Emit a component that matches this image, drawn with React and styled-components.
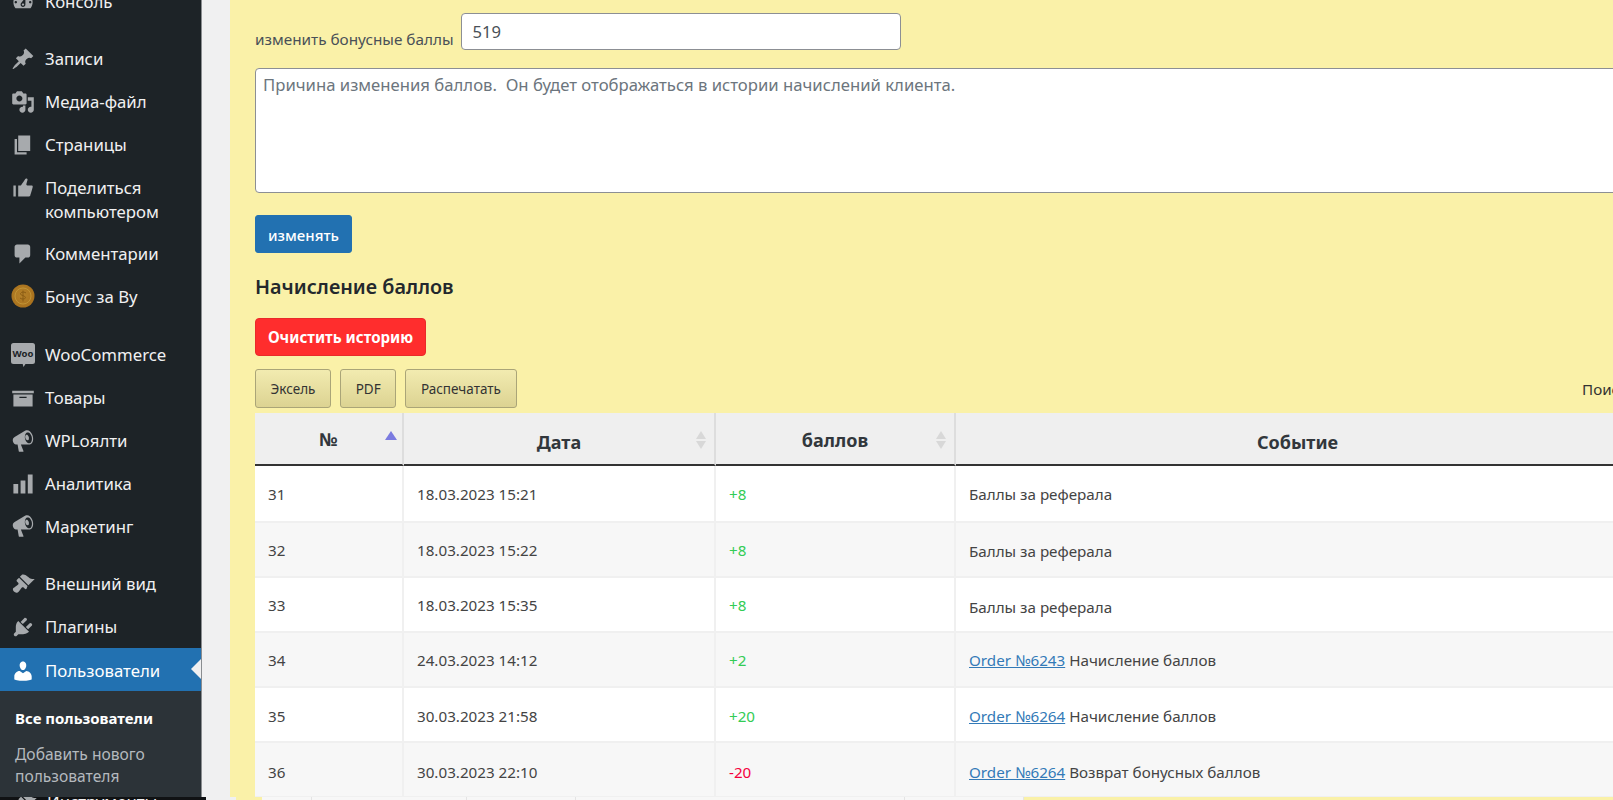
import React from "react";
import styled, { createGlobalStyle } from "styled-components";

const Global = createGlobalStyle`
  html, body { margin: 0; padding: 0; height: 800px; overflow: hidden; background: #f0f0f1; }
  body { font-family: "Noto Sans", "Open Sans", sans-serif; }
  * { box-sizing: border-box; }
`;

const Page = styled.div`display:flex;flex-direction:column;width:1613px;height:800px;overflow:hidden;`;
const Top = styled.div`display:flex;height:797px;flex:none;`;
const Sidebar = styled.nav`width:202px;flex:none;background:#1d2327;border-right:1px solid #8a8d90;overflow:hidden;`;
const Menu = styled.ul`list-style:none;margin:-20px 0 0;padding:0;color:#f0f0f1;`;
const Item = styled.li`
  position:relative;display:flex;align-items:${p=>p.$tall?"flex-start":"center"};gap:10px;padding:${p=>p.$active?"2px":p.$tall?"10px":"0"} 0 0 11px;min-height:${p=>p.$tall?"66px":"42.8px"};
  margin-top:${p=>p.$sep||0}px;font-size:16.8px;line-height:23.5px;
  background:${p=>p.$active?"#2271b1":"transparent"};color:${p=>p.$active?"#fff":"#f0f0f1"};
  ${p=>p.$active?`&::after{content:"";position:absolute;right:0;top:11px;border:10px solid transparent;border-right-color:#f0f0f1;border-left-width:0;}`:""}
`;
const ItemLabel = styled.span`display:block;width:${p=>p.$wrap?"130px":"auto"};white-space:${p=>p.$wrap?"normal":"nowrap"};`;
const Glyph = styled.svg`width:24px;height:24px;flex:none;fill:${p=>p.$active?"#fff":"#a7aaad"};`;
const StripGlyph = styled(Glyph)`margin-top:-6px;`;
const Sub = styled.ul`list-style:none;margin:0;padding:16px 0 0 15px;background:#2c3338;height:107px;`;
const SubItem = styled.li`font-size:${p=>p.$current?15:15.6}px;line-height:22px;font-weight:${p=>p.$current?700:400};color:${p=>p.$current?"#fff":"#b4b9be"};margin-bottom:14px;`;
const Gutter = styled.div`width:28px;flex:none;background:#f0f0f1;`;
const Main = styled.main`flex:1;min-width:0;background:#faf1a8;padding:13px 0 0 25px;overflow:hidden;`;

const InputRow = styled.div`display:flex;align-items:flex-end;gap:7px;height:37px;`;
const Label = styled.label`font-size:15.3px;line-height:20px;color:#495057;padding-bottom:1px;`;
const Field = styled.input`width:440px;height:37px;border:1px solid #8c8f94;border-radius:4px;padding:0 11px;font:16.6px "Noto Sans",sans-serif;color:#495057;background:#fff;`;
const Reason = styled.textarea`display:block;width:1400px;height:125px;margin:18px 0 0;border:1px solid #8c8f94;border-radius:4px;padding:4px 7px;font:16.7px/24px "Noto Sans",sans-serif;color:#6c757d;background:#fff;resize:none;`;
const Submit = styled.button`display:block;margin-top:22px;width:97px;height:38px;border:1px solid #2271b1;border-radius:3px;background:#2271b1;color:#fff;font:500 15px "Noto Sans",sans-serif;padding:1px 0 0;`;
const Heading = styled.h3`margin:20px 0 0;font-size:19.8px;line-height:28px;font-weight:600;color:#23282d;`;
const Danger = styled.button`display:block;margin-top:17px;width:171px;height:38px;border:1px solid #e92a2a;border-radius:4px;background:#ff2d2d;color:#fff;font:700 15.1px "Noto Sans",sans-serif;padding:0;`;
const Tools = styled.div`display:flex;align-items:center;gap:9px;width:1386px;height:39px;margin-top:13px;`;
const ToolButton = styled.button`height:39px;padding:0 14.6px;border:1px solid #aaa578;border-radius:3px;background:linear-gradient(#f2ebb0,#dcd392);color:#333;font:13.5px "Noto Sans",sans-serif;`;
const Search = styled.span`margin-left:auto;width:59px;font-size:15.2px;color:#333;white-space:nowrap;`;

const Table = styled.table`width:1386px;margin-top:5px;border-collapse:separate;border-spacing:0;table-layout:fixed;`;
const Head = styled.th`
  position:relative;height:53px;background:#efefef;border-right:2px solid #ddd;border-bottom:2px solid #333;
  font-size:18px;font-weight:700;color:#32373c;text-align:center;padding:${p=>p.$drop}px 0 0;
`;
const Up = styled.i`position:absolute;right:${p=>p.$right}px;top:${p=>p.$top}px;border:${p=>p.$half}px solid transparent;border-top:0;border-bottom:${p=>p.$h}px solid ${p=>p.$c};`;
const Down = styled.i`position:absolute;right:${p=>p.$right}px;top:${p=>p.$top}px;border:${p=>p.$half}px solid transparent;border-bottom:0;border-top:${p=>p.$h}px solid ${p=>p.$c};`;
const Row = styled.tr`background:${p=>p.$odd?"#fff":"#f7f7f7"};`;
const Cell = styled.td`
  height:${p=>p.$h}px;padding:${p=>p.$shift||0}px 13px 0;border-right:2px solid #f0f0f0;border-bottom:${p=>p.$last?1:2}px solid #f0f0f0;
  font-size:15.2px;line-height:20px;color:${p=>p.$c||"#444"};
`;
const Link = styled.a`color:#337ab7;text-decoration:underline;`;

const Strip = styled.div`display:flex;height:3px;flex:none;overflow:hidden;`;
const StripSide = styled.div`width:206px;flex:none;background:#101214;display:flex;gap:10px;padding-left:13px;color:#f0f0f1;font-size:16.8px;line-height:16px;`;
const StripText = styled.span`display:block;margin-top:-3px;`;
const StripGap = styled.div`width:${p=>p.$w}px;flex:${p=>p.$grow?1:"none"};background:${p=>p.$bg};`;
const StripCell = styled.div`width:${p=>p.$w}px;flex:none;background:#f7f7f7;border-right:1px solid #e4e4e4;`;

const P = {
  dash:"M3.76 16h12.48c1.1-1.37 1.76-3.11 1.76-5 0-4.42-3.58-8-8-8s-8 3.58-8 8c0 1.89.66 3.63 1.76 5zM10 4c.55 0 1 .45 1 1s-.45 1-1 1-1-.45-1-1 .45-1 1-1zM6 6c.55 0 1 .45 1 1s-.45 1-1 1-1-.45-1-1 .45-1 1-1zm8 0c.55 0 1 .45 1 1s-.45 1-1 1-1-.45-1-1 .45-1 1-1zm-5.37 5.55L12 7v6c0 1.1-.9 2-2 2s-2-.9-2-2c0-.57.24-1.08.63-1.45zM4 10c.55 0 1 .45 1 1s-.45 1-1 1-1-.45-1-1 .45-1 1-1zm12 0c.55 0 1 .45 1 1s-.45 1-1 1-1-.45-1-1 .45-1 1-1zm-5 3c0-.55-.45-1-1-1s-1 .45-1 1 .45 1 1 1 1-.45 1-1z",
  pin:"M10.44 3.02l1.82-1.82 6.36 6.35-1.83 1.82c-1.05-.68-2.48-.57-3.41.36l-.75.75c-.92.93-1.04 2.35-.35 3.41l-1.83 1.82-2.41-2.41-2.8 2.79c-.42.42-3.38 2.71-3.8 2.29s1.86-3.39 2.28-3.81l2.79-2.79L4.1 9.36l1.83-1.82c1.05.69 2.48.57 3.4-.36l.75-.75c.93-.92 1.05-2.35.36-3.41z",
  media:"M13 11V4c0-.55-.45-1-1-1h-1.67L9 1H5L3.67 3H2c-.55 0-1 .45-1 1v7c0 .55.45 1 1 1h10c.55 0 1-.45 1-1zM7 4.5c1.38 0 2.5 1.12 2.5 2.5S8.38 9.5 7 9.5 4.5 8.38 4.5 7 5.62 4.5 7 4.5zM14 6h5v10.5c0 1.38-1.12 2.5-2.5 2.5S14 17.88 14 16.5s1.12-2.5 2.5-2.5c.17 0 .34.02.5.05V9h-3V6zm-4 8.05V13h2v3.5c0 1.38-1.12 2.5-2.5 2.5S7 17.88 7 16.5 8.12 14 9.5 14c.17 0 .34.02.5.05z",
  page:"M6 15V2h10v13H6zm-1 1h8v2H3V5h2v11z",
  thumb:"M12.72 2c.15-.02.26.02.41.07.56.19.83.79.66 1.35-.17.55-1 3.04-1 3.58 0 .53.75 1 1.35 1h3c.6 0 1 .4 1 1s-2 7-2 7c-.17.39-.55 1-1 1H6V8h2.14c.41-.41 3.3-4.71 3.58-5.27.21-.41.6-.68 1-.73zM2 8h2v9H2V8z",
  comment:"M5 2h9c1.1 0 2 .9 2 2v7c0 1.1-.9 2-2 2h-2l-5 5v-5H5c-1.1 0-2-.9-2-2V4c0-1.1.9-2 2-2z",
  box:"M19 4v2H1V4h18zM2 7h16v10H2V7zm11 3V9H7v1h6z",
  mega:"M18.15 5.94c.46 1.62.38 3.22-.02 4.48-.42 1.28-1.26 2.18-2.3 2.48-.16.06-.26.06-.4.06-.06.02-.12.02-.18.02-.06.02-.14.02-.22.02h-6.8l2.22 5.5c.02.14-.06.26-.14.34-.08.1-.24.16-.34.16H6.95c-.1 0-.26-.06-.34-.16-.08-.08-.16-.2-.14-.34l-1-5.5H4.25l-.02-.02c-.5.06-1.08-.18-1.54-.62s-.88-1.08-1.06-1.88c-.24-.8-.2-1.56-.02-2.2.18-.62.58-1.08 1.06-1.3l.02-.02 9-5.4c.1-.06.18-.1.24-.16.06-.04.14-.08.24-.12.16-.08.28-.12.5-.18 1.04-.3 2.24.1 3.22.98s1.76 2.18 2.26 3.78zm-2.58 5.98h-.02c.4-.1.74-.34 1.04-.7.58-.7.86-1.76.86-3.04-.02-.64-.12-1.3-.32-2.04-.24-.7-.54-1.36-.88-1.86-.36-.52-.76-.92-1.22-1.18-.46-.24-.94-.34-1.36-.22-.04.02-.1.02-.14.04-.02 0-.14.02-.16.02-.02 0-.14.02-.16.04l-.14.06c-.26.14-.52.36-.72.62-.56.74-.84 1.78-.84 3 .02.62.12 1.26.32 1.94.24.7.52 1.32.88 1.82.36.52.78.92 1.24 1.18.48.24.96.34 1.4.22.04-.02.08-.02.12-.04zm-.76-5.2c.18.64.18 1.24.06 1.72-.12.48-.4.82-.8.94-.4.12-.84 0-1.22-.36-.38-.36-.7-.88-.88-1.52-.18-.62-.18-1.22-.06-1.7.12-.48.4-.82.8-.94.4-.12.84 0 1.22.36.38.36.7.88.88 1.5z",
  chart:"M18 18V2h-4v16h4zm-6 0V7H8v11h4zm-6 0v-8H2v8h4z",
  brush:"M14.48 11.06L7.41 3.99l1.5-1.5c.5-.56 2.3-.47 3.51.32 1.21.8 1.43 1.28 2.91 2.1 1.18.64 2.45 1.26 4.45.85zm-.71.71L6.7 4.7 4.93 6.47c-.39.39-.39 1.02 0 1.41l1.06 1.06c.39.39.39 1.03 0 1.42-.6.6-1.43 1.11-2.21 1.69-.35.26-.7.53-1.01.84C1.43 13.23.99 14.83 2.44 16.3c1.45 1.45 3.13 1.01 4.11-.11.3-.31.57-.66.83-1.01.58-.78 1.09-1.61 1.69-2.21.39-.39 1.03-.39 1.42 0l1.06 1.06c.39.39 1.02.39 1.41 0z",
  plug:"M13.11 4.36L9.87 7.6 8 5.73l3.24-3.24c.35-.34 1.05-.2 1.56.32.52.51.66 1.21.31 1.55zm-8 1.77l.91-1.12 9.01 9.01-1.19.84c-.71.71-2.63 1.16-3.82 1.16H6.14L4.9 17.26c-.59.59-1.54.59-2.12 0-.59-.58-.59-1.53 0-2.12l1.24-1.24v-3.88c0-1.13.4-3.19 1.09-3.89zm7.26 3.97l3.24-3.24c.34-.35 1.04-.21 1.55.31.52.51.66 1.21.31 1.55l-3.24 3.25z",
  user:"M10 9.25c-2.27 0-2.73-3.44-2.73-3.44C7 4.02 7.82 2 9.97 2c2.16 0 2.98 2.02 2.71 3.81 0 0-.41 3.44-2.68 3.44zm0 2.57L12.72 10c2.39 0 4.52 2.33 4.52 4.53v2.49s-3.65 1.13-7.24 1.13c-3.65 0-7.24-1.13-7.24-1.13v-2.49c0-2.25 1.94-4.48 4.47-4.48z",
};

const Icon = ({ d, active }) => (
  <Glyph $active={active} viewBox="0 0 20 20"><path d={d} /></Glyph>
);
const Coin = () => (
  <Glyph viewBox="0 0 24 24">
    <defs><radialGradient id="g" cx=".45" cy=".45" r=".6"><stop offset="0" stopColor="#b5822a" /><stop offset="1" stopColor="#a8701c" /></radialGradient></defs>
    <circle cx="12" cy="12" r="11.5" fill="url(#g)" />
    <circle cx="12" cy="12" r="8" fill="none" stroke="#c79a3a" strokeWidth=".8" />
    <path d="M15 9c-.6-1-4.8-1.6-5.4.4-.6 2.6 5 1.8 4.8 4.4-.2 1.8-4.4 1.4-5.4.2M12 6.5v11" fill="none" stroke="#8a5c14" strokeWidth="1" />
  </Glyph>
);
const Woo = () => (
  <Glyph viewBox="0 0 24 24">
    <path d="M2.5 0h19A2.5 2.5 0 0 1 24 2.5v16a2.5 2.5 0 0 1-2.5 2.5h-7l-2 3-.8-3H2.5A2.5 2.5 0 0 1 0 18.500v-16A2.5 2.500 0 0 1 2.500 0z" />
    <text x="12" y="13.600" textAnchor="middle" fontSize="9.500" fontWeight="700" fontFamily="'Noto Sans',sans-serif" fill="#1d2327">Woo</text>
  </Glyph>
);

const menu = [
  { t: "Консоль", i: <Icon d={P.dash} /> },
  { t: "Записи", i: <Icon d={P.pin} />, sep: 15 },
  { t: "Медиа-файл", i: <Icon d={P.media} /> },
  { t: "Страницы", i: <Icon d={P.page} /> },
  { t: "Поделиться компьютером", i: <Icon d={P.thumb} />, tall: true },
  { t: "Комментарии", i: <Icon d={P.comment} /> },
  { t: "Бонус за Ву", i: <Coin /> },
  { t: "WooCommerce", i: <Woo />, sep: 16 },
  { t: "Товары", i: <Icon d={P.box} /> },
  { t: "WPLoялти", i: <Icon d={P.mega} /> },
  { t: "Аналитика", i: <Icon d={P.chart} /> },
  { t: "Маркетинг", i: <Icon d={P.mega} /> },
  { t: "Внешний вид", i: <Icon d={P.brush} />, sep: 15 },
  { t: "Плагины", i: <Icon d={P.plug} /> },
  { t: "Пользователи", i: <Icon d={P.user} active />, active: true },
];

const rows = [
  { n: "31", d: "18.03.2023 15:21", v: "+8", e: "Баллы за реферала", s: 0, es: 0 },
  { n: "32", d: "18.03.2023 15:22", v: "+8", e: "Баллы за реферала", s: 0, es: 3 },
  { n: "33", d: "18.03.2023 15:35", v: "+8", e: "Баллы за реферала", s: 0, es: 4 },
  { n: "34", d: "24.03.2023 14:12", v: "+2", o: "Order №6243", e: "Начисление баллов", s: 0, es: 0 },
  { n: "35", d: "30.03.2023 21:58", v: "+20", o: "Order №6264", e: "Начисление баллов", s: 2, es: 2 },
  { n: "36", d: "30.03.2023 22:10", v: "-20", o: "Order №6264", e: "Возврат бонусных баллов", s: 4, es: 4 },
];

const SortPair = ({ right }) => (
  <>
    <Up $right={right} $top={18} $half={5} $h={8} $c="#d8d8d8" />
    <Down $right={right} $top={28} $half={5} $h={8} $c="#d8d8d8" />
  </>
);

export default function App() {
  return (
    <Page>
      <Global />
      <Top>
        <Sidebar>
          <Menu>
            {menu.map((m) => (
              <Item key={m.t} $sep={m.sep} $tall={m.tall} $active={m.active}>
                {m.i}
                <ItemLabel $wrap={m.tall}>{m.t}</ItemLabel>
              </Item>
            ))}
          </Menu>
          <Sub>
            <SubItem $current>Все пользователи</SubItem>
            <SubItem>Добавить нового пользователя</SubItem>
          </Sub>
        </Sidebar>
        <Gutter />
        <Main>
          <InputRow>
            <Label>изменить бонусные баллы</Label>
            <Field defaultValue="519" />
          </InputRow>
          <Reason defaultValue="Причина изменения баллов.  Он будет отображаться в истории начислений клиента." />
          <Submit>изменять</Submit>
          <Heading>Начисление баллов</Heading>
          <Danger>Очистить историю</Danger>
          <Tools>
            <ToolButton>Эксель</ToolButton>
            <ToolButton>PDF</ToolButton>
            <ToolButton>Распечатать</ToolButton>
            <Search>Поиск:</Search>
          </Tools>
          <Table>
            <colgroup>
              <col width="149" /><col width="312" /><col width="240" /><col width="685" />
            </colgroup>
            <thead>
              <tr>
                <Head $drop={0}>№<Up $right={5} $top={18} $half={6} $h={9} $c="#7b7be0" /></Head>
                <Head $drop={6}>Дата<SortPair right={8} /></Head>
                <Head $drop={3}>баллов<SortPair right={8} /></Head>
                <Head $drop={6}>Событие</Head>
              </tr>
            </thead>
            <tbody>
              {rows.map((r, i) => {
                const h = i === 0 ? 57 : i === 5 ? 54 : 55;
                return (
                  <Row key={r.n} $odd={i % 2 === 0}>
                    <Cell $h={h} $last={i === 5} $shift={r.s}>{r.n}</Cell>
                    <Cell $h={h} $last={i === 5} $shift={r.s}>{r.d}</Cell>
                    <Cell $h={h} $last={i === 5} $shift={r.s} $c={r.v[0] === "-" ? "#f5003c" : "#33cc55"}>{r.v}</Cell>
                    <Cell $h={h} $last={i === 5} $shift={r.es}>
                      {r.o && <><Link href="#">{r.o}</Link> </>}{r.e}
                    </Cell>
                  </Row>
                );
              })}
            </tbody>
          </Table>
        </Main>
      </Top>
      <Strip>
        <StripSide><StripGlyph viewBox="0 0 20 20"><path d={P.brush} /></StripGlyph><StripText>Инструменты</StripText></StripSide>
        <StripGap $w={30} $bg="#f0f0f1" />
        <StripGap $w={26} $bg="#faf1a8" />
        {[50, 155, 109, 329, 119].map((w) => <StripCell key={w} $w={w} />)}
        <StripGap $grow $bg="#faf1a8" />
      </Strip>
    </Page>
  );
}
